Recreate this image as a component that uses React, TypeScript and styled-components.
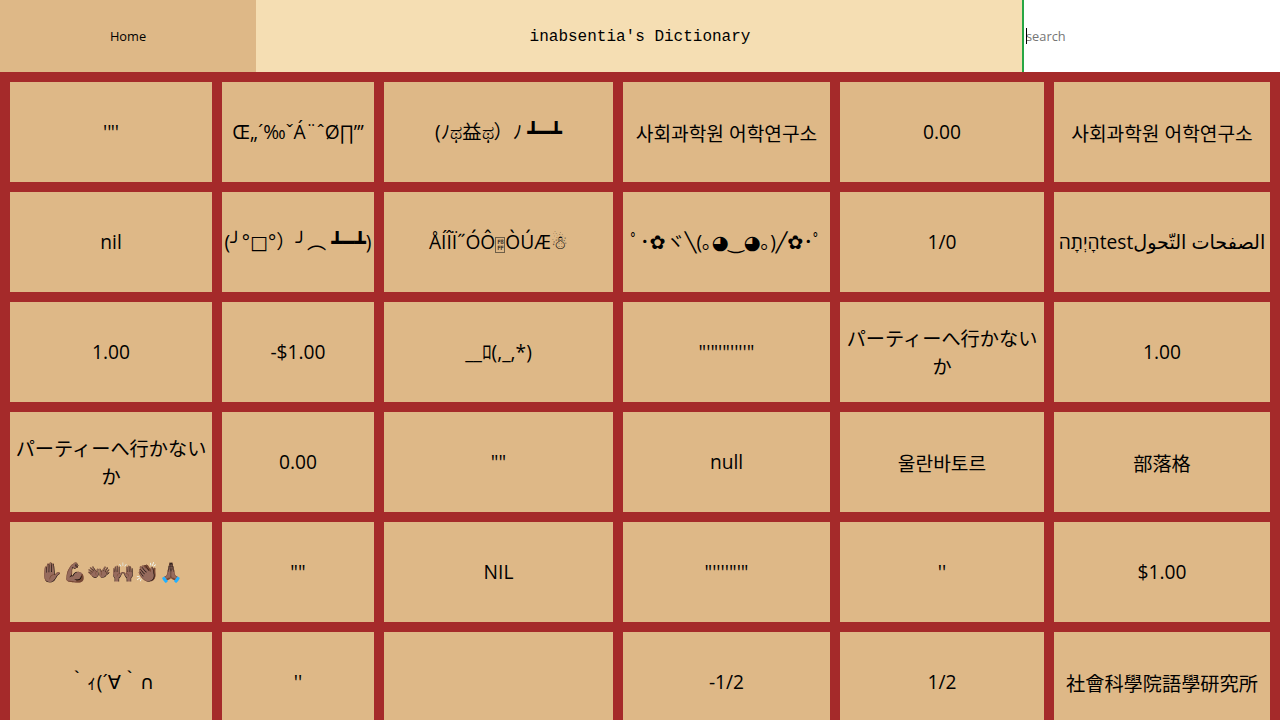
import React from "react";
import styled, { createGlobalStyle } from "styled-components";

const Global = createGlobalStyle`
  html, body { margin: 0; padding: 0; height: 100%; overflow: hidden; background: #a52a2a; }
  * { box-sizing: border-box; }
`;
const Page = styled.div`
  width: 1280px;
  height: 720px;
  overflow: hidden;
  background: #a52a2a;
`;
const Header = styled.header`
  display: grid;
  grid-template-columns: 256px 766px 258px;
  height: 72px;
`;
const HomeButton = styled.button`
  border: 0;
  padding: 0;
  background: #deb887;
  color: #000;
  font: 12.8px "Open Sans", sans-serif;
`;
const Title = styled.div`
  display: flex;
  align-items: center;
  justify-content: center;
  padding: 2px 0 0 2px;
  background: #f5deb3;
  color: #000;
  font: 16px "Liberation Mono", monospace;
`;
const SearchBox = styled.div`
  position: relative;
  display: flex;
`;
const Search = styled.input`
  flex: 1;
  min-width: 0;
  border: 0;
  border-left: 2px solid #28a745;
  outline: none;
  padding: 0 2px;
  background: #fff;
  caret-color: transparent;
  font: 12.8px "Open Sans", sans-serif;
`;
const Caret = styled.span`
  position: absolute;
  left: 4px;
  top: 28px;
  width: 1px;
  height: 16px;
  background: #000;
`;
const Grid = styled.main`
  display: grid;
  grid-template-columns: 202px 152px 229px 207px 204px 216px;
  grid-auto-rows: 100px;
  gap: 10px;
  padding: 10px;
`;
const Cell = styled.div<{ $drop?: number }>`
  display: flex;
  align-items: center;
  justify-content: center;
  padding: ${(p) => (p.$drop ?? 0) * 2}px 0 0;
  background: #deb887;
  color: #000;
  text-align: center;
  font: 19.2px/28px "Open Sans", "DejaVu Sans", "Noto Sans CJK JP", sans-serif;
`;
const Line = styled.span``;
const MissingGlyph = styled.span`
  display: inline-block;
  width: 10px;
  height: 16px;
  border: 1px solid #6f5f48;
  vertical-align: -1px;
  color: #3a3026;
  font: 700 6px/6.5px "DejaVu Sans Mono", monospace;
  letter-spacing: -0.6px;
  word-break: break-all;
  padding-top: 0.5px;
`;
const Emoji = styled.span`
  display: inline-block;
  filter: brightness(1.3) saturate(1.15);
`;

const KO = 2;
const JA = 1;
type Item = { text?: string; drop?: number; node?: React.ReactNode };
const cells: Item[] = [
  { text: `'"'` },
  { text: "Œ„´‰ˇÁ¨ˆØ∏”’" },
  { text: "(ﾉಥ益ಥ）ﾉ ┻━┻" },
  { text: "사회과학원 어학연구소", drop: KO },
  { text: "0.00" },
  { text: "사회과학원 어학연구소", drop: KO },
  { text: "nil" },
  { text: "(╯°□°）╯︵ ┻━┻)" },
  {
    node: (
      <Line>
        ÅÍÎÏ˝ÓÔ<MissingGlyph>F8FF</MissingGlyph>ÒÚÆ☃
      </Line>
    ),
  },
  { text: "ﾟ･✿ヾ╲(｡◕‿◕｡)╱✿･ﾟ" },
  { text: "1/0" },
  { text: "הָיְתָהtestالصفحات التّحول" },
  { text: "1.00" },
  { text: "-$1.00" },
  { text: "__ﾛ(,_,*)" },
  { text: `"'"'"''''"` },
  { text: "パーティーへ行かないか", drop: JA },
  { text: "1.00" },
  { text: "パーティーへ行かないか", drop: JA },
  { text: "0.00" },
  { text: `""` },
  { text: "null" },
  { text: "울란바토르", drop: KO },
  { text: "部落格", drop: KO },
  { node: <Emoji>✋🏿💪🏿👐🏿🙌🏿👏🏿🙏🏿</Emoji> },
  { text: `""` },
  { text: "NIL" },
  { text: `"''''"'"` },
  { text: `''` },
  { text: "$1.00" },
  { text: "｀ｨ(´∀｀∩" },
  { text: `''` },
  { text: "" },
  { text: "-1/2" },
  { text: "1/2" },
  { text: "社會科學院語學研究所", drop: KO },
];

export default function App() {
  return (
    <Page>
      <Global />
      <Header>
        <HomeButton>Home</HomeButton>
        <Title>inabsentia's Dictionary</Title>
        <SearchBox>
          <Search placeholder="search" />
          <Caret />
        </SearchBox>
      </Header>
      <Grid>
        {cells.map((c, i) => (
          <Cell key={i} $drop={c.drop}>
            {c.node ?? c.text}
          </Cell>
        ))}
      </Grid>
    </Page>
  );
}
